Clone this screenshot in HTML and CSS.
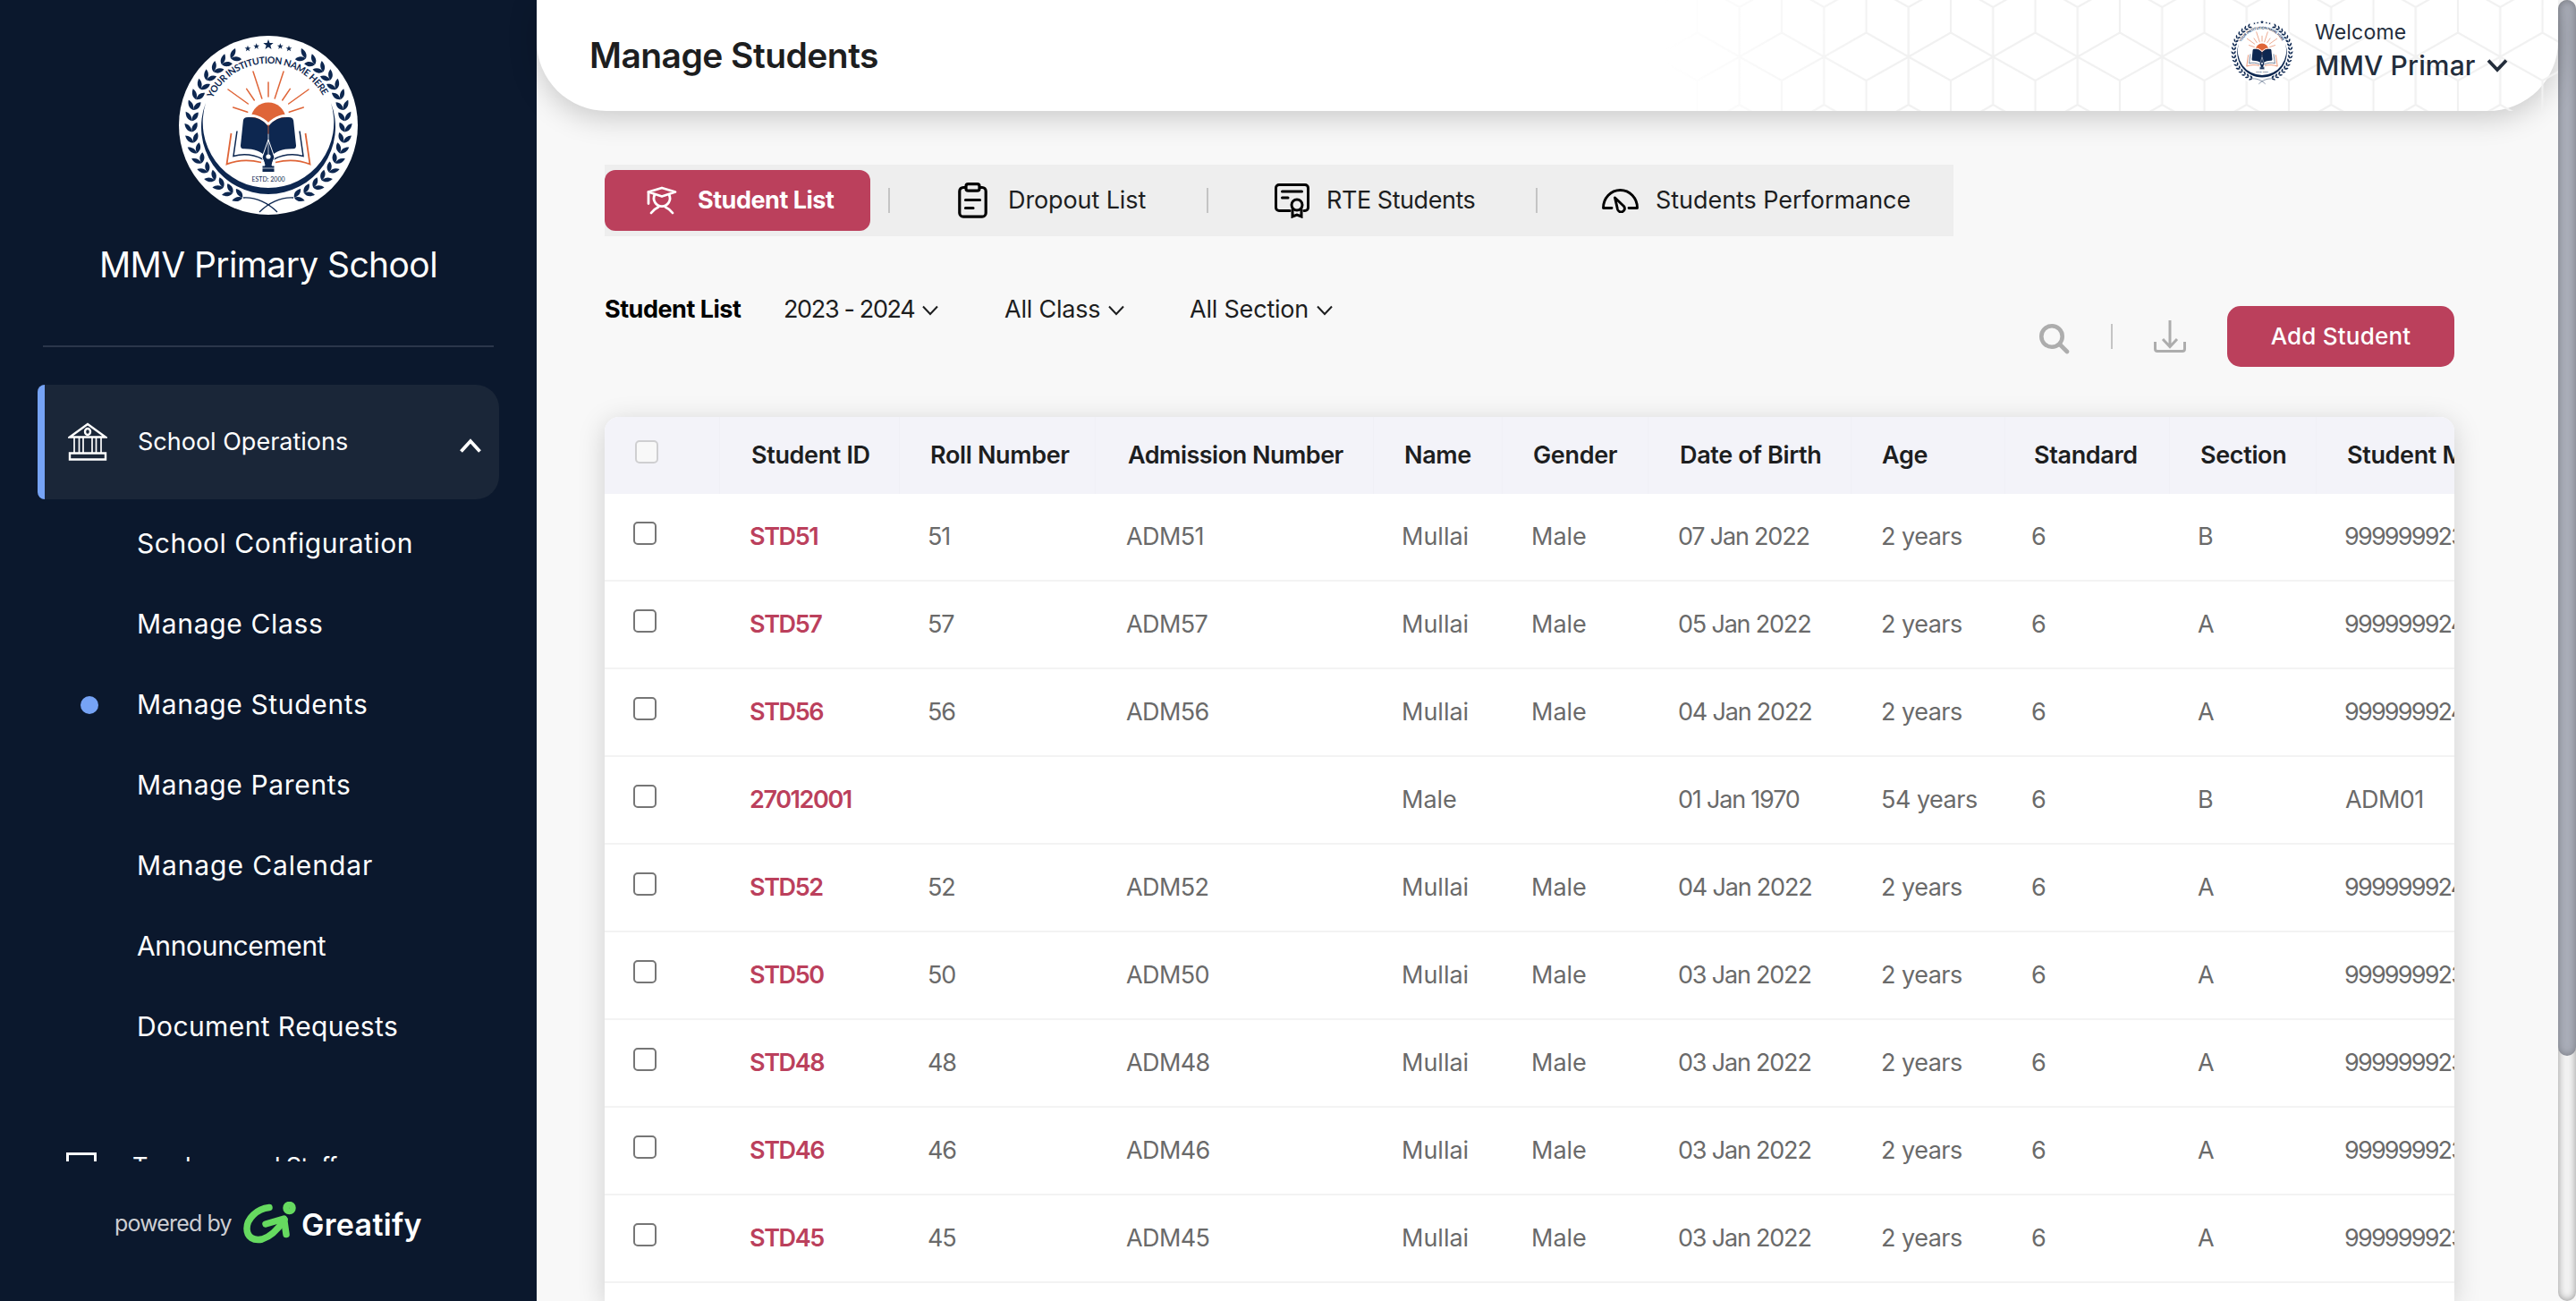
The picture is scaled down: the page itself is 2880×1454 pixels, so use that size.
FILE: index.html
```html
<!DOCTYPE html>
<html lang="en">
<head>
<meta charset="utf-8">
<title>Manage Students</title>
<link rel="stylesheet" href="styles.css">
</head>
<body>
<svg class="defs" width="0" height="0" aria-hidden="true">
  <defs>
    <g id="leaf">
      <path d="M95 14.500C95.500 9.500 99 7 104.500 6.500C103.500 11 100.500 14 95 14.500Z"/>
      <path d="M95 14.500C99.500 13.500 104 15.500 105.500 20.500C100.500 21.500 96.500 19.500 95 14.500Z"/>
    </g>
    <g id="branch">
      <use href="#leaf" transform="rotate(-26 100 100)"/>
      <use href="#leaf" transform="rotate(-34.200 100 100)"/>
      <use href="#leaf" transform="rotate(-42.400 100 100)"/>
      <use href="#leaf" transform="rotate(-50.600 100 100)"/>
      <use href="#leaf" transform="rotate(-58.800 100 100)"/>
      <use href="#leaf" transform="rotate(-67 100 100)"/>
      <use href="#leaf" transform="rotate(-75.200 100 100)"/>
      <use href="#leaf" transform="rotate(-83.400 100 100)"/>
      <use href="#leaf" transform="rotate(-91.600 100 100)"/>
      <use href="#leaf" transform="rotate(-99.800 100 100)"/>
      <use href="#leaf" transform="rotate(-108 100 100)"/>
      <use href="#leaf" transform="rotate(-116.200 100 100)"/>
      <use href="#leaf" transform="rotate(-124.400 100 100)"/>
      <use href="#leaf" transform="rotate(-132.600 100 100)"/>
      <use href="#leaf" transform="rotate(-140.800 100 100)"/>
      <use href="#leaf" transform="rotate(-149 100 100)"/>
      <use href="#leaf" transform="rotate(-157 100 100)"/>
      <path d="M72 181C86 180 100 187 110 197" fill="none" stroke="#0d2750" stroke-width="1.300"/>
    </g>
    <path id="star" d="M0-6L1.500-1.900L5.700-1.900L2.300.700L3.500 4.900L0 2.400L-3.500 4.900L-2.300.700L-5.700-1.900L-1.500-1.900Z"/>
    <g id="page">
      <path d="M99.600 101C93 92 83 90 75 91.300Q72.200 91.800 71.900 94.800L69 122.500Q68.800 126 72 126.200C84 126 92 129 97 135L99.600 119Z"/>
      <path d="M65 106.500L61 134.500C72 131.500 84 133 94 138" fill="none" stroke="#0d2750" stroke-width="1.500"/>
      <path d="M58.500 109L53.500 143.500C66 138.500 80 138.500 92 141.500" fill="none" stroke="#df6538" stroke-width="1.800"/>
      <path d="M83 40L92.800 70M75.700 59.300L84.300 72M55 60L77.300 76M60.700 80L76.700 85.300" fill="none" stroke="#df6538" stroke-width="1.500" stroke-linecap="round"/>
    </g>
    <path id="motto" d="M37.500 70A69.500 69.500 0 0 1 162.500 70"/>
    <g id="crest" fill="#0d2750">
      <circle cx="100" cy="100" r="100" fill="#fff"/>
      <use href="#branch"/>
      <use href="#branch" transform="translate(200 0) scale(-1 1)"/>
      <use href="#star" transform="translate(100 10)"/>
      <use href="#star" transform="translate(86.700 11.800) scale(.6)"/>
      <use href="#star" transform="translate(113.300 11.800) scale(.6)"/>
      <use href="#star" transform="translate(77 14.300) scale(.6)"/>
      <use href="#star" transform="translate(123 14.300) scale(.6)"/>
      <path d="M30 75A75 75 0 1 0 170 75A73.300 73.300 0 1 1 30 75Z"/>
      <text class="crest-name"><textPath href="#motto" textLength="152">YOUR INSTITUTION NAME HERE</textPath></text>
      <path d="M80.500 92A19.600 19.600 0 0 1 119.500 92L119 97L100 110L81 97Z" fill="#df6538"/>
      <path d="M100 52V68" stroke="#df6538" stroke-width="1.500" stroke-linecap="round"/>
      <path d="M100 99C92 90 82 88 74 90M100 99C108 90 118 88 126 90" fill="none" stroke="#fff" stroke-width="3"/>
      <use href="#page"/>
      <use href="#page" transform="translate(200 0) scale(-1 1)"/>
      <path d="M100 116L107 136Q104.500 141 104 145H107V152.500H93V145H96Q95.500 141 93 136Z" stroke="#fff" stroke-width="1"/>
      <circle cx="100" cy="135" r="2.600" fill="#fff"/>
      <path d="M100 118V134M93 148H107" stroke="#fff" stroke-width=".7"/>
      <text class="crest-year" x="100" y="162.500" text-anchor="middle" textLength="37">ESTD: 2000</text>
    </g>
    <pattern id="hex" width="94.500" height="160" patternUnits="userSpaceOnUse" x="37.500">
      <path d="M47.250 8V117M47.250 8L0-19M47.250 8L94.500-19M0-19V36.500M94.500-19V36.500M0 36.500L47.250 63.500L94.500 36.500M0 90L47.250 63.500L94.500 90M0 90V144M94.500 90V144M47.250 117L0 144M47.250 117L94.500 144" fill="none" stroke="#f1f1f1" stroke-width="2.200"/>
    </pattern>
    <linearGradient id="fade"><stop offset="0" stop-color="#000"/><stop offset=".25" stop-color="#fff"/></linearGradient>
    <mask id="fademask"><rect width="1000" height="124" fill="url(#fade)"/></mask>
  </defs>
</svg>

<aside class="sidebar">
  <svg class="logo" viewBox="0 0 200 200"><use href="#crest"/></svg>
  <h2 class="school">MMV Primary School</h2>
  <hr class="divider">
  <nav class="nav">
    <div class="group active">
      <svg class="group-icon" width="44" height="44" viewBox="0 0 44 44" fill="none" stroke="#fff" stroke-width="2.400">
        <path d="M2 16.500L22 2L42 16.500Z"/><ellipse cx="22" cy="10.500" rx="3" ry="3.500"/>
        <path d="M7 17V34M12.500 17V34M17 17V34M27 17V34M31.500 17V34M37 17V34" stroke-width="1.700"/><path d="M2 34.500H42V41.500H2Z"/>
      </svg>
      <span>School Operations</span>
      <svg class="chev" width="26" height="18" viewBox="0 0 26 18" fill="none" stroke="#fff" stroke-width="3.800"><path d="M2.500 15.500L13 4L23.500 15.500"/></svg>
    </div>
    <ul class="sub">
      <li class="conf">School Configuration</li>
      <li>Manage Class</li>
      <li class="current">Manage Students</li>
      <li>Manage Parents</li>
      <li class="cal">Manage Calendar</li>
      <li class="ann">Announcement</li>
      <li class="doc">Document Requests</li>
    </ul>
    <div class="group next">
      <svg width="34" height="30" viewBox="0 0 34 30" fill="none" stroke="#fff" stroke-width="3"><rect x="1.500" y="1.500" width="31" height="26"/></svg>
      <span>Teachers and Staff</span>
    </div>
  </nav>
  <footer class="powered">
    <span class="by">powered by</span>
    <svg width="60" height="48" viewBox="0 0 60 48" fill="none" stroke="#66da60" stroke-width="7.500" stroke-linecap="round" stroke-linejoin="round">
      <path d="M29 6.500C15 8 4 19 4 30C4 40 12 44 21 42C31 39 40 29 46 20"/><path d="M25 25L45.500 19L48 36.500"/><circle cx="51.500" cy="7" r="3.500"/>
    </svg>
    <span class="brand">Greatify</span>
  </footer>
</aside>

<div class="page">
  <header class="topbar">
    <svg class="hexes" width="1000" height="124"><rect width="1000" height="124" fill="url(#hex)" mask="url(#fademask)"/></svg>
    <h1 class="title">Manage Students</h1>
    <div class="user">
      <svg class="avatar" viewBox="0 0 200 200"><use href="#crest"/></svg>
      <div class="who">
        <span class="hello">Welcome</span>
        <span class="name">MMV Primar
          <svg width="24" height="16" viewBox="0 0 24 16" fill="none" stroke="#232d3b" stroke-width="3.800"><path d="M2 2.500L12 13L22 2.500"/></svg>
        </span>
      </div>
    </div>
  </header>

  <main class="content">
    <div class="tabs">
      <div class="tab on">
        <svg width="34" height="32" viewBox="0 0 34 32" fill="none" stroke="#fff" stroke-width="2.800" stroke-linejoin="round" stroke-linecap="round">
          <path d="M2 6.500L17 2L32 6.500L17 11.500Z"/><path d="M2 6.500V19.500M9 9.500A9 9 0 1 0 25 9.500"/><path d="M5 30Q8.500 25.500 13 23.500M29 30Q25.500 25.500 21 23.500"/>
        </svg><span>Student List</span>
      </div>
      <i class="sep"></i>
      <div class="tab dropout">
        <svg width="33" height="40" viewBox="0 0 33 40" fill="none" stroke="#000" stroke-width="3.200" stroke-linecap="round">
          <path d="M8.500 5.500H6A4.200 4.200 0 0 0 1.800 9.700V34A4.200 4.200 0 0 0 6 38.200H27A4.200 4.200 0 0 0 31.200 34V9.700A4.200 4.200 0 0 0 27 5.500H24.500"/><rect x="9" y="1.700" width="15" height="7.500" rx="2.500"/><path d="M8.500 19.500H24.500M8.500 28.500H17"/>
        </svg><span>Dropout List</span>
      </div>
      <i class="sep"></i>
      <div class="tab rte">
        <svg width="39" height="39" viewBox="0 0 39 39" fill="none" stroke="#000" stroke-width="3" stroke-linecap="round">
          <path d="M17 30.500H5A3.500 3.500 0 0 1 1.500 27V5A3.500 3.500 0 0 1 5 1.500H34A3.500 3.500 0 0 1 37.500 5V27A3.500 3.500 0 0 1 34 30.500H33"/><path d="M8.500 9H30.500M8.500 16H15"/><circle cx="25" cy="24" r="6"/><path d="M20 29V37L25 35L30 37V29"/>
        </svg><span>RTE Students</span>
      </div>
      <i class="sep"></i>
      <div class="tab perf">
        <svg width="41" height="28" viewBox="0 0 41 28" fill="none" stroke="#000" stroke-width="2.900" stroke-linecap="round" stroke-linejoin="round">
          <path d="M11 22.500H1.500A19 20 0 0 1 39.500 22.500H30"/><path d="M14.500 11L24.500 20.500A4 4 0 1 1 17.500 24Z"/>
        </svg><span>Students Performance</span>
      </div>
    </div>

    <div class="toolbar">
      <div class="filters">
        <h3>Student List</h3>
        <span class="year">2023 - 2024<svg width="18" height="12" viewBox="0 0 18 12"><path d="M1 1.500L9 10L17 1.500"/></svg></span>
        <span>All Class<svg width="18" height="12" viewBox="0 0 18 12"><path d="M1 1.500L9 10L17 1.500"/></svg></span>
        <span>All Section<svg width="18" height="12" viewBox="0 0 18 12"><path d="M1 1.500L9 10L17 1.500"/></svg></span>
      </div>
      <div class="actions">
        <svg class="search" width="34" height="34" viewBox="0 0 34 34" fill="none" stroke="#adadad" stroke-width="4.600" stroke-linecap="round"><circle cx="14" cy="14" r="11.700"/><path d="M23 23L31 31"/></svg>
        <i class="sep"></i>
        <svg width="36" height="36" viewBox="0 0 36 36" fill="none" stroke="#adadad" stroke-width="3"><path d="M18 0V29M10 21L18 29.500L26 21"/><path d="M1.500 24V32Q1.500 34.500 4 34.500H32Q34.500 34.500 34.500 32V24"/></svg>
        <button class="add">Add Student</button>
      </div>
    </div>

    <div class="card">
      <table class="grid">
        <colgroup><col class="c0"><col class="c1"><col class="c2"><col class="c3"><col class="c4"><col class="c5"><col class="c6"><col class="c7"><col class="c8"><col class="c9"><col class="c10"></colgroup>
        <thead><tr><th><i class="box"></i></th><th>Student ID</th><th>Roll Number</th><th class="adm">Admission Number</th><th>Name</th><th>Gender</th><th>Date of Birth</th><th>Age</th><th>Standard</th><th>Section</th><th>Student Mobile</th></tr></thead>
        <tbody>
          <tr><td><i class="box"></i></td><td>STD51</td><td>51</td><td>ADM51</td><td>Mullai</td><td>Male</td><td>07 Jan 2022</td><td>2 years</td><td>6</td><td>B</td><td>999999923</td></tr>
          <tr><td><i class="box"></i></td><td>STD57</td><td>57</td><td>ADM57</td><td>Mullai</td><td>Male</td><td>05 Jan 2022</td><td>2 years</td><td>6</td><td>A</td><td>999999924</td></tr>
          <tr><td><i class="box"></i></td><td>STD56</td><td>56</td><td>ADM56</td><td>Mullai</td><td>Male</td><td>04 Jan 2022</td><td>2 years</td><td>6</td><td>A</td><td>999999924</td></tr>
          <tr><td><i class="box"></i></td><td>27012001</td><td></td><td></td><td>Male</td><td></td><td>01 Jan 1970</td><td>54 years</td><td>6</td><td>B</td><td class="code">ADM01</td></tr>
          <tr><td><i class="box"></i></td><td>STD52</td><td>52</td><td>ADM52</td><td>Mullai</td><td>Male</td><td>04 Jan 2022</td><td>2 years</td><td>6</td><td>A</td><td>999999924</td></tr>
          <tr><td><i class="box"></i></td><td>STD50</td><td>50</td><td>ADM50</td><td>Mullai</td><td>Male</td><td>03 Jan 2022</td><td>2 years</td><td>6</td><td>A</td><td>999999923</td></tr>
          <tr><td><i class="box"></i></td><td>STD48</td><td>48</td><td>ADM48</td><td>Mullai</td><td>Male</td><td>03 Jan 2022</td><td>2 years</td><td>6</td><td>A</td><td>999999923</td></tr>
          <tr><td><i class="box"></i></td><td>STD46</td><td>46</td><td>ADM46</td><td>Mullai</td><td>Male</td><td>03 Jan 2022</td><td>2 years</td><td>6</td><td>A</td><td>999999923</td></tr>
          <tr><td><i class="box"></i></td><td>STD45</td><td>45</td><td>ADM45</td><td>Mullai</td><td>Male</td><td>03 Jan 2022</td><td>2 years</td><td>6</td><td>A</td><td>999999923</td></tr>
        </tbody>
      </table>
    </div>
  </main>
</div>
<div class="scroll"><div class="thumb"></div></div>
</body>
</html>
```

FILE: styles.css
```css
* { box-sizing: border-box; margin: 0; padding: 0; }
body {
  display: flex; width: 2880px; height: 1454px; overflow: hidden;
  background: #f8f8f8; color: #1d1e1f;
  font-family: Inter, "Liberation Sans", sans-serif; font-size: 27px;
}
svg { display: block; flex: none; }
.defs { position: absolute; }
i { display: block; flex: none; }

/* Sidebar */
.sidebar { flex: none; width: 600px; padding-top: 40px; background: #0b182d; color: #fff; }
.logo { width: 200px; height: 200px; margin: 0 auto; }
.crest-name { font: 700 10.5px Lato, sans-serif; }
.crest-year { font: 400 7px Lato, sans-serif; }
.school { margin-top: 32px; text-align: center; font-size: 39px; font-weight: 400; line-height: 48px; letter-spacing: -.6px; }
.divider { margin: 66px 48px 0; border: 0; height: 2px; background: #2b364a; }
.nav { height: 868px; margin-top: 42px; overflow: hidden; }
.group { display: flex; align-items: center; height: 128px; }
.group.active {
  position: relative; width: 516px; margin-left: 42px; padding: 0 19px 0 26px;
  background: #1a2638; border-left: 8px solid #76a3f5; border-radius: 8px 26px 26px 8px;
  font-size: 27px;
}
.group.active span { margin: -1px 0 0 34px; }
.group .chev { margin: 7px 0 0 auto; }
.sub { margin-top: 4px; list-style: none; }
.sub li { position: relative; height: 90px; padding-left: 153px; font-size: 30px; line-height: 90px; letter-spacing: .66px; }
.sub .conf { letter-spacing: .5px; }
.sub .cal { letter-spacing: .9px; }
.sub .ann { letter-spacing: -.35px; }
.sub .doc { letter-spacing: .4px; }
.sub .current::before { content: ""; position: absolute; left: 90px; top: 36px; width: 20px; height: 20px; border-radius: 50%; background: #76a3f5; }
.group.next { margin-top: 47px; padding-left: 74px; }
.group.next span { margin-left: 40px; letter-spacing: -.7px; }
.powered { display: flex; align-items: center; height: 48px; margin-top: 45px; padding-left: 128px; }
.by { width: 144px; font-size: 25px; letter-spacing: -.85px; color: #cdced3; }
.brand { margin: 2px 0 0 5px; font-size: 34px; font-weight: 600; letter-spacing: .3px; }

/* Top bar */
.page { flex: none; width: 2260px; }
.topbar {
  position: relative; display: flex; justify-content: space-between; height: 124px; padding: 0 54px 0 59px;
  background: #fff; border-radius: 0 0 78px 78px; box-shadow: 0 8px 32px rgba(0, 0, 0, .19);
}
.hexes { position: absolute; right: 0; top: 0; }
.title { font-size: 39px; font-weight: 600; line-height: 123px; letter-spacing: -.54px; }
.user { position: relative; display: flex; }
.avatar { width: 74px; height: 74px; margin: 21px 22px 0 0; }
.who { width: 218px; padding-top: 20px; }
.hello { display: block; font-size: 23px; line-height: 32px; letter-spacing: .2px; color: #232d3b; }
.name { display: flex; align-items: center; gap: 12px; margin-top: 1px; font-size: 30px; font-weight: 500; line-height: 40px; letter-spacing: .15px; color: #232d3b; }

/* Tabs */
.content { padding: 60px 116px 0 76px; }
.tabs { display: flex; align-items: center; width: 1508px; height: 80px; background: #eee; }
.tab { display: flex; align-items: center; }
.tab span { margin-top: -1px; }
.tab.on { width: 297px; height: 68px; margin-right: 20px; padding-left: 47px; gap: 23px; border-radius: 12px; background: #bb405c; color: #fff; font-weight: 700; letter-spacing: -.48px; }
.tab.dropout { width: 354px; padding-left: 76px; gap: 23px; letter-spacing: -.1px; }
.tab.rte { width: 366px; padding-left: 74px; gap: 19px; letter-spacing: -.45px; }
.tab.perf { width: 465px; padding-left: 72px; gap: 19px; letter-spacing: -.05px; }
.sep { width: 2px; height: 28px; background: #c4c4c4; }

/* Filters and actions */
.toolbar { display: flex; justify-content: space-between; margin-top: 64px; }
.filters { display: grid; grid-template-columns: 200px 247px 207px auto; height: 36px; line-height: 36px; letter-spacing: -.2px; }
.filters h3 { font-size: 27px; font-weight: 700; letter-spacing: -.48px; color: #000; }
.filters span { display: flex; align-items: center; gap: 9px; }
.filters .year { letter-spacing: -1.35px; }
.filters svg { margin-top: 2px; fill: none; stroke: #1d1e1f; stroke-width: 2px; }
.actions { display: flex; align-items: center; gap: 46px; height: 68px; margin-top: 14px; }
.search { margin-top: 5px; }
.add { width: 254px; height: 68px; border: 0; border-radius: 15px; background: #bb405c; color: #fff; font: 500 26px/68px Inter, sans-serif; letter-spacing: .2px; }

/* Table */
.card { width: 2068px; height: 988px; margin-top: 56px; overflow: hidden; border-radius: 16px 16px 0 0; background: #fff; box-shadow: 0 6px 30px rgba(0, 0, 0, .17); }
.grid { width: 2214px; table-layout: fixed; border-collapse: separate; border-spacing: 0; font-size: 27px; text-align: left; }
.c0 { width: 129px; } .c1 { width: 201px; } .c2 { width: 219px; } .c3 { width: 311px; } .c4 { width: 144px; }
.c5 { width: 163px; } .c6 { width: 227px; } .c7 { width: 172px; } .c8 { width: 184px; } .c9 { width: 164px; } .c10 { width: 300px; }
.grid th { height: 86px; padding-left: 34px; padding-bottom: 1px; background: #f3f3f9; border-right: 1px solid #f0f0f6; font-weight: 600; letter-spacing: -.35px; white-space: nowrap; }
.grid th.adm { padding-left: 36px; letter-spacing: -.5px; }
.grid th:nth-child(2), .grid th:nth-child(7) { padding-left: 35px; }
.grid th:nth-child(9) { padding-left: 32px; }
.grid td { height: 98px; padding-left: 32px; padding-bottom: 1px; border-bottom: 2px solid #f3f3f3; color: #6a6a6a; white-space: nowrap; }
.grid td:nth-child(2) { padding-left: 33px; color: #bb405c; font-weight: 600; letter-spacing: -1.4px; }
.grid td:nth-child(3) { padding-left: 31px; letter-spacing: -1.2px; }
.grid td:nth-child(4), .grid td.code { letter-spacing: -.6px; }
.grid td:nth-child(4) { padding-left: 34px; }
.grid td:nth-child(5) { padding-left: 31px; }
.grid td:nth-child(7) { padding-left: 33px; letter-spacing: -1.2px; }
.grid td:nth-child(8) { padding-left: 33px; letter-spacing: -.5px; }
.grid td:nth-child(9) { padding-left: 29px; }
.grid td:nth-child(10) { padding-left: 31px; }
.grid td:nth-child(11):not(.code) { padding-left: 31px; letter-spacing: -1.8px; }
.box { width: 26px; height: 26px; margin-top: -7px; border: 2px solid #767676; border-radius: 5px; background: #fff; }
th .box { border-color: #cfcfd1; background: #f8f8f8; }

/* Page scrollbar */
.scroll { flex: none; width: 20px; height: 1454px; border-radius: 10px; background: #f2f2f2; box-shadow: inset 0 0 8px rgba(0, 0, 0, .4); }
.thumb { height: 1180px; border-radius: 10px; background: #a9adb8; box-shadow: inset 0 0 8px rgba(0, 0, 0, .3); }
```
